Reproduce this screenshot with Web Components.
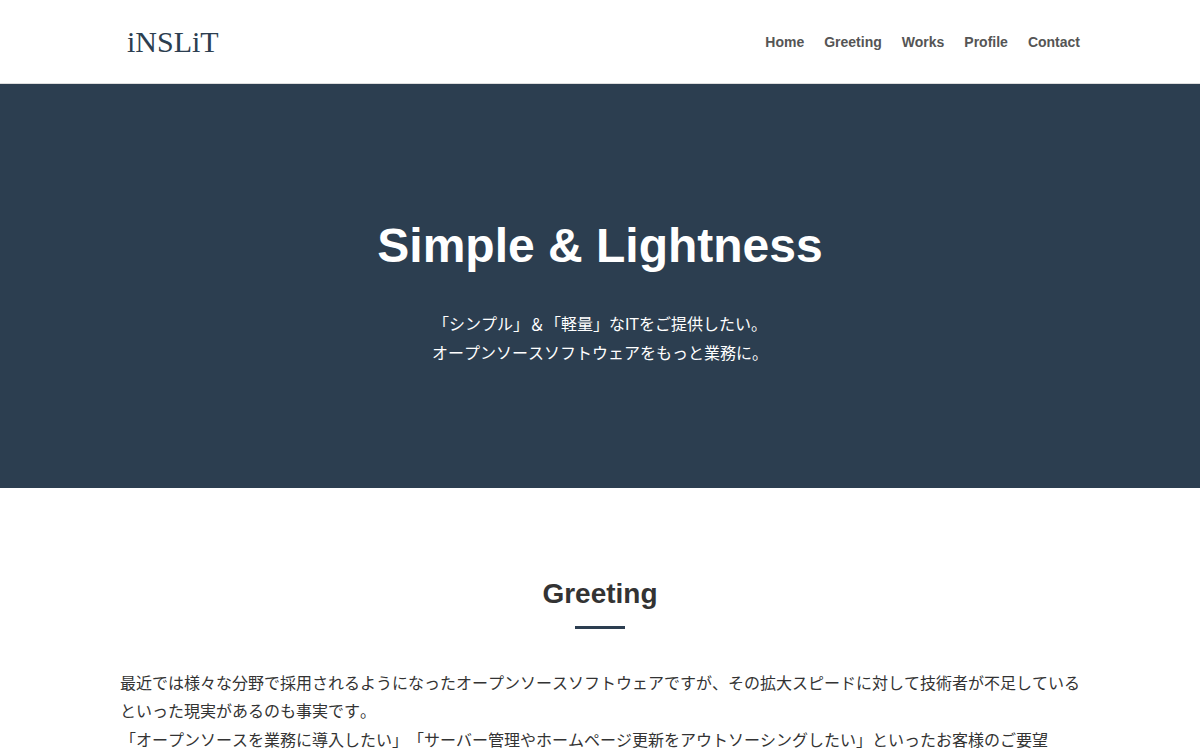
<!DOCTYPE html>
<html lang="ja">
<head>
<meta charset="utf-8">
<title>iNSLiT</title>
<style>
body { margin: 0; background: #fff; color: #333; font: 16px/1.8 "Liberation Sans", "Noto Sans CJK JP", sans-serif; text-spacing-trim: space-all; }
</style>
</head>
<body>
<site-header>
  <nav-link href="#home">Home</nav-link>
  <nav-link href="#greeting">Greeting</nav-link>
  <nav-link href="#works">Works</nav-link>
  <nav-link href="#profile">Profile</nav-link>
  <nav-link href="#contact">Contact</nav-link>
</site-header>
<main>
  <hero-banner id="home">
    <span slot="title">Simple &amp; Lightness</span>
    「シンプル」＆「軽量」なITをご提供したい。<br>オープンソースソフトウェアをもっと業務に。
  </hero-banner>
  <page-section id="greeting">
    <span slot="title">Greeting</span>
    最近では様々な分野で採用されるようになったオープンソースソフトウェアですが、その拡大スピードに対して技術者が不足しているといった現実があるのも事実です。<br>「オープンソースを業務に導入したい」「サーバー管理やホームページ更新をアウトソーシングしたい」といったお客様のご要望
  </page-section>
</main>
<script>
const define = (name, html, setup) => customElements.define(name, class extends HTMLElement {
  constructor() {
    super();
    this.attachShadow({ mode: "open" }).innerHTML = html;
  }
  connectedCallback() { if (setup) setup(this); }
});

define("nav-link", `
  <style>
    :host { display: block; }
    a { color: #555; font-size: 14px; font-weight: bold; line-height: 24px; text-decoration: none; }
    a:hover { color: #2c3e50; }
  </style>
  <a><slot></slot></a>`,
  el => { el.shadowRoot.querySelector("a").href = el.getAttribute("href"); });

define("site-header", `
  <style>
    :host { display: block; border-bottom: 1px solid #ddd; }
    header { display: flex; align-items: center; justify-content: space-between; max-width: 960px; margin: 0 auto; padding: 24px 20px 23px; }
    .logo { padding-left: 7px; color: #2c3e50; font: 30px/36px "Liberation Serif", serif; text-decoration: none; }
    nav { display: flex; gap: 20px; }
  </style>
  <header><a class="logo" href="#home">iNSLiT</a><nav><slot></slot></nav></header>`);

define("hero-banner", `
  <style>
    :host { display: block; background: #2c3e50; color: #fff; text-align: center; }
    section { padding: 120px 20px 119px; }
    h1 { margin: 0 0 23px; font-size: 48px; line-height: 84px; }
    p { margin: 0; font-kerning: none; }
  </style>
  <section><h1><slot name="title"></slot></h1><p><slot></slot></p></section>`);

define("page-section", `
  <style>
    :host { display: block; }
    section { max-width: 960px; margin: 0 auto; padding: 80px 20px; }
    h2 { margin: 0 0 41px; font-size: 28px; line-height: 52px; text-align: center; }
    h2::after { content: ""; display: block; width: 50px; height: 3px; margin: 6px auto 0; background: #2c3e50; }
    p { margin: 0; font-kerning: none; }
  </style>
  <section><h2><slot name="title"></slot></h2><p><slot></slot></p></section>`);
</script>
</body>
</html>
